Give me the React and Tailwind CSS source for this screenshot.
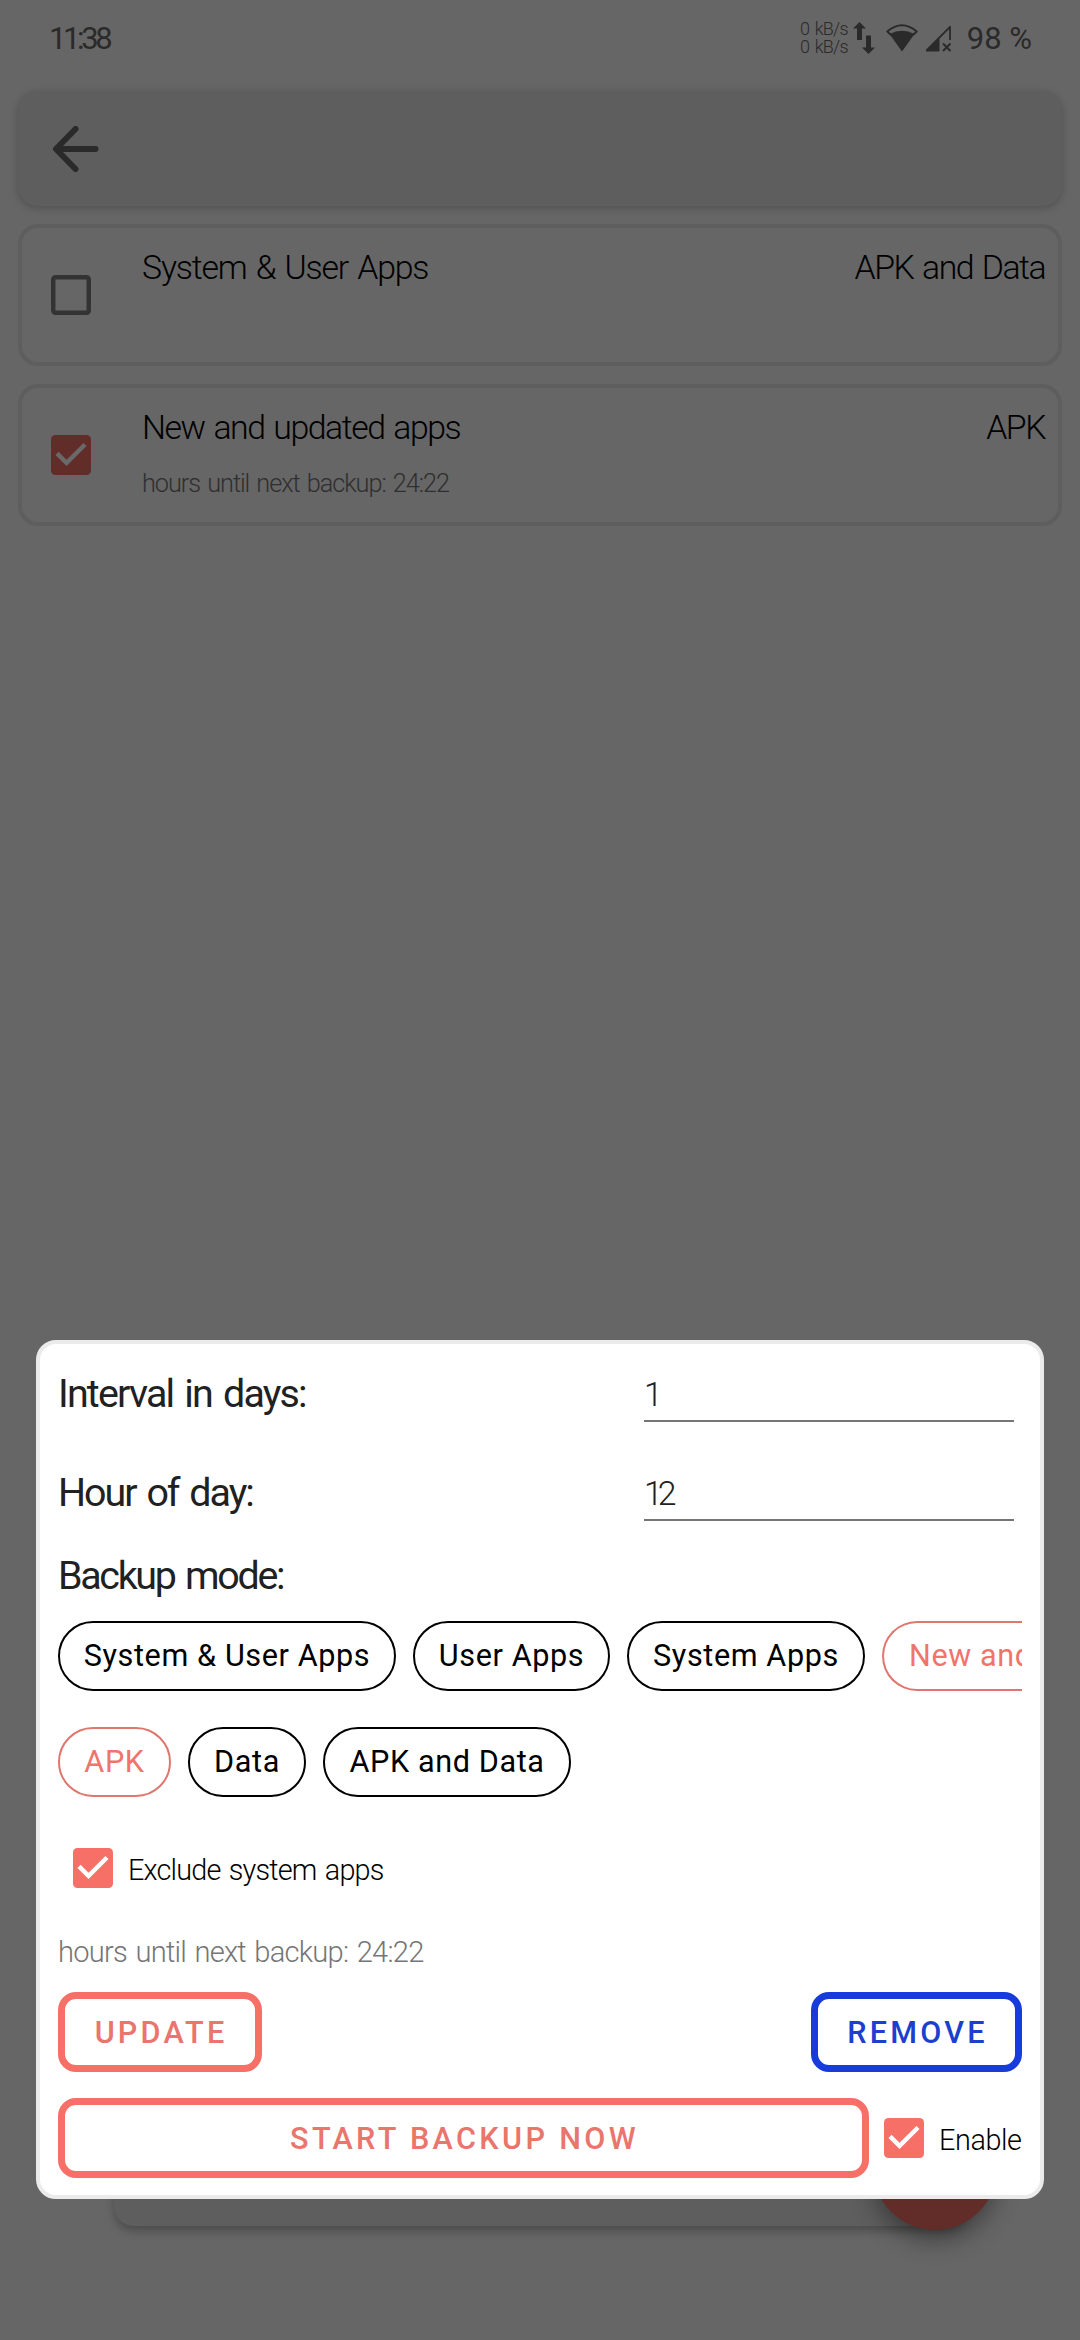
import React from "react";

const CheckBox = ({ box, tick }) => (
  <svg viewBox="3 3 18 18" className="w-10 h-10 shrink-0">
    <rect x="3" y="3" width="18" height="18" rx="2" className={box} />
    <path d="M10 17l-5-5 1.41-1.41L10 14.17l7.59-7.59L19 8z" className={tick} />
  </svg>
);

const EmptyBox = () => (
  <svg viewBox="3 3 18 18" className="w-10 h-10 shrink-0">
    <rect x="4" y="4" width="16" height="16" rx="1" fill="none" stroke="#333333" strokeWidth="2" />
  </svg>
);

const StatusIcons = () => (
  <>
    <svg viewBox="0 0 22 32" className="w-[22px] h-8 ml-[5px]" fill="#2a2a2a">
      <path d="M6.5 0L13 6.5H9V18H4V6.5H0z" />
      <path d="M15.5 32L9 25.500h4V13.500h5v12h4z" />
    </svg>
    <svg viewBox="0 0 32 28" className="w-8 h-7 ml-[11px]" fill="none" stroke="#2a2a2a">
      <path d="M4.500 10.500L1.300 7.500Q16-5 30.700 7.500L27.500 10.500" strokeWidth="2" strokeLinejoin="round" strokeLinecap="round" />
      <path d="M3.500 10Q16 3.500 28.500 10L16 27.500z" fill="#2a2a2a" stroke="none" />
    </svg>
    <svg viewBox="0 0 27 27" className="w-[27px] h-[27px] ml-[7px]" fill="none" stroke="#2a2a2a">
      <path d="M1.500 25.500L25 1.800V15" strokeWidth="1.800" strokeLinejoin="round" />
      <path d="M1 26L14 13V26z" fill="#2a2a2a" strokeWidth="1" strokeLinejoin="round" />
      <path d="M18 18.500l7.500 7.500M25.500 18.500l-7.500 7.500" strokeWidth="2" />
    </svg>
  </>
);

const chip = "h-[70px] shrink-0 rounded-full border-2 flex items-center justify-center text-[30.600px] tracking-[0.600px] whitespace-nowrap";
const dark = "border-black text-black";
const coral = "border-[#e0776f] text-[#f0746b]";
const button = "h-20 rounded-[18px] border-[7px] pt-[2px] pl-[2px] flex items-center justify-center text-[30.600px] font-medium whitespace-nowrap";

export default function App() {
  return (
    <div className="relative w-[1080px] h-[2340px] overflow-hidden bg-[#666666] font-['Roboto',sans-serif] text-black whitespace-nowrap">
      <header className="h-[76px] flex items-center pl-[49px] pr-[48px] text-[#2a2a2a]">
        <span className="mt-[2px] text-[31px] leading-9 tracking-[-3.400px]">11:38</span>
        <div className="ml-auto flex items-center">
          <div className="flex flex-col text-[18px] leading-[18px] font-light tracking-[-0.800px] [word-spacing:2px]">
            <span>0 kB/s</span>
            <span>0 kB/s</span>
          </div>
          <StatusIcons />
          <span className="mt-[2px] text-[31px] leading-9 ml-[15px]">98 %</span>
        </div>
      </header>

      <nav className="mt-[15px] mx-[18px] h-[115px] rounded-[20px] bg-[#5e5e5e] shadow-[0_2px_8px_rgba(0,0,0,0.22)] flex items-center pl-[35px]">
        <svg viewBox="0 0 46 46" className="w-[46px] h-[46px]" fill="none" stroke="#2a2a2a" strokeWidth="6" strokeLinecap="round" strokeLinejoin="round">
          <path d="M22.500 3L3 23L22.500 43M4 23H42.500" />
        </svg>
      </nav>

      <main className="mt-[18px] mx-[18px] flex flex-col gap-[18px]">
        <section className="h-[142px] rounded-[20px] border-4 border-[#5e5e5e] flex pl-[29px] pr-[13px]">
          <div className="mt-[47px]"><EmptyBox /></div>
          <div className="ml-[51px] mt-[20px] flex-1">
            <div className="flex justify-between text-[33.800px] leading-[40px] font-light">
              <span className="tracking-[-1.150px] [word-spacing:2px]">System &amp; User Apps</span>
              <span className="tracking-[-1.500px] [word-spacing:2px]">APK and Data</span>
            </div>
          </div>
        </section>
        <section className="h-[142px] rounded-[20px] border-4 border-[#5e5e5e] flex pl-[29px] pr-[13px]">
          <div className="mt-[47px]"><CheckBox box="fill-[#622c29]" tick="fill-[#696969]" /></div>
          <div className="ml-[51px] mt-[20px] flex-1">
            <div className="flex justify-between text-[33.800px] leading-[40px] font-light">
              <span className="tracking-[-1.450px] [word-spacing:2px]">New and updated apps</span>
              <span className="tracking-[-1.500px]">APK</span>
            </div>
            <div className="mt-[20px] text-[25.300px] leading-[32px] font-light tracking-[-1.050px] [word-spacing:2px] text-[#2f2f2f]">hours until next backup: 24:22</div>
          </div>
        </section>
      </main>

      <div className="absolute left-[114px] top-[2110px] w-[852px] h-[116px] rounded-[20px] bg-[#5e5e5e] shadow-[0_5px_8px_rgba(0,0,0,0.25)]" />
      <div className="absolute left-[873px] top-[2106px] w-[124px] h-[124px] rounded-full bg-[#622c29] shadow-[0_10px_24px_rgba(0,0,0,0.38)]" />

      <div className="absolute left-[36px] top-[1340px] w-[1008px] h-[859px] rounded-[20px] border-4 border-[#ebebeb] bg-white px-[18px]">
        <div className="h-[78px] flex items-end justify-between">
          <label className="-mb-[2px] text-[39.400px] leading-[60px] tracking-[-1.800px] [word-spacing:3px] text-[#212121]">Interval in days:</label>
          <div className="w-[370px] h-[54px] mr-2 border-b-2 border-[#757575] text-[33.800px] leading-[54px] font-light text-[#212121]">1</div>
        </div>
        <div className="h-[99px] flex items-end justify-between">
          <label className="-mb-[2px] text-[39.400px] leading-[60px] tracking-[-2px] [word-spacing:3px] text-[#212121]">Hour of day:</label>
          <div className="w-[370px] h-[54px] mr-2 border-b-2 border-[#757575] text-[33.800px] leading-[54px] font-light tracking-[-5px] text-[#212121]">12</div>
        </div>
        <div className="mt-[25px] text-[39.400px] leading-[60px] tracking-[-2.300px] [word-spacing:3px] text-[#212121]">Backup mode:</div>

        <div className="mt-[15px] flex gap-[17px] overflow-hidden">
          <div className={`${chip} ${dark} w-[338px]`}>System &amp; User Apps</div>
          <div className={`${chip} ${dark} w-[197px]`}>User Apps</div>
          <div className={`${chip} ${dark} w-[238px]`}>System Apps</div>
          <div className="h-[70px] w-[140px] shrink-0 overflow-hidden rounded-l-full border-2 border-r-0 border-[#e0776f] text-[#f0746b] pl-[25px] text-[30.600px] leading-[66px] tracking-[0.600px]">New and updated apps</div>
        </div>
        <div className="mt-[36px] flex gap-[17px]">
          <div className={`${chip} ${coral} w-[113px]`}>APK</div>
          <div className={`${chip} ${dark} w-[118px]`}>Data</div>
          <div className={`${chip} ${dark} w-[248px]`}>APK and Data</div>
        </div>

        <div className="mt-[51px] ml-[15px] h-10 flex items-center">
          <CheckBox box="fill-[#f77067]" tick="fill-white" />
          <span className="ml-[15px] mt-[4px] text-[28.800px] leading-10 font-light tracking-[-0.800px] [word-spacing:2px]">Exclude system apps</span>
        </div>
        <div className="mt-[44px] text-[29.100px] leading-10 font-light tracking-[-0.750px] [word-spacing:2px] text-[#757575]">hours until next backup: 24:22</div>

        <div className="mt-5 flex justify-between">
          <div className={`${button} border-[#f77067] text-[#e9756c] w-[204px] tracking-[3.200px]`}>UPDATE</div>
          <div className={`${button} border-[#183cdc] text-[#1c3fd0] w-[211px] tracking-[3.200px]`}>REMOVE</div>
        </div>
        <div className="mt-[26px] flex items-center">
          <div className={`${button} border-[#f77067] text-[#e9756c] w-[811px] tracking-[3.350px]`}>START BACKUP NOW</div>
          <div className="ml-[15px]"><CheckBox box="fill-[#f77067]" tick="fill-white" /></div>
          <span className="ml-[15px] mt-[3px] text-[28.800px] leading-10 font-light tracking-[-0.400px]">Enable</span>
        </div>
      </div>
    </div>
  );
}
